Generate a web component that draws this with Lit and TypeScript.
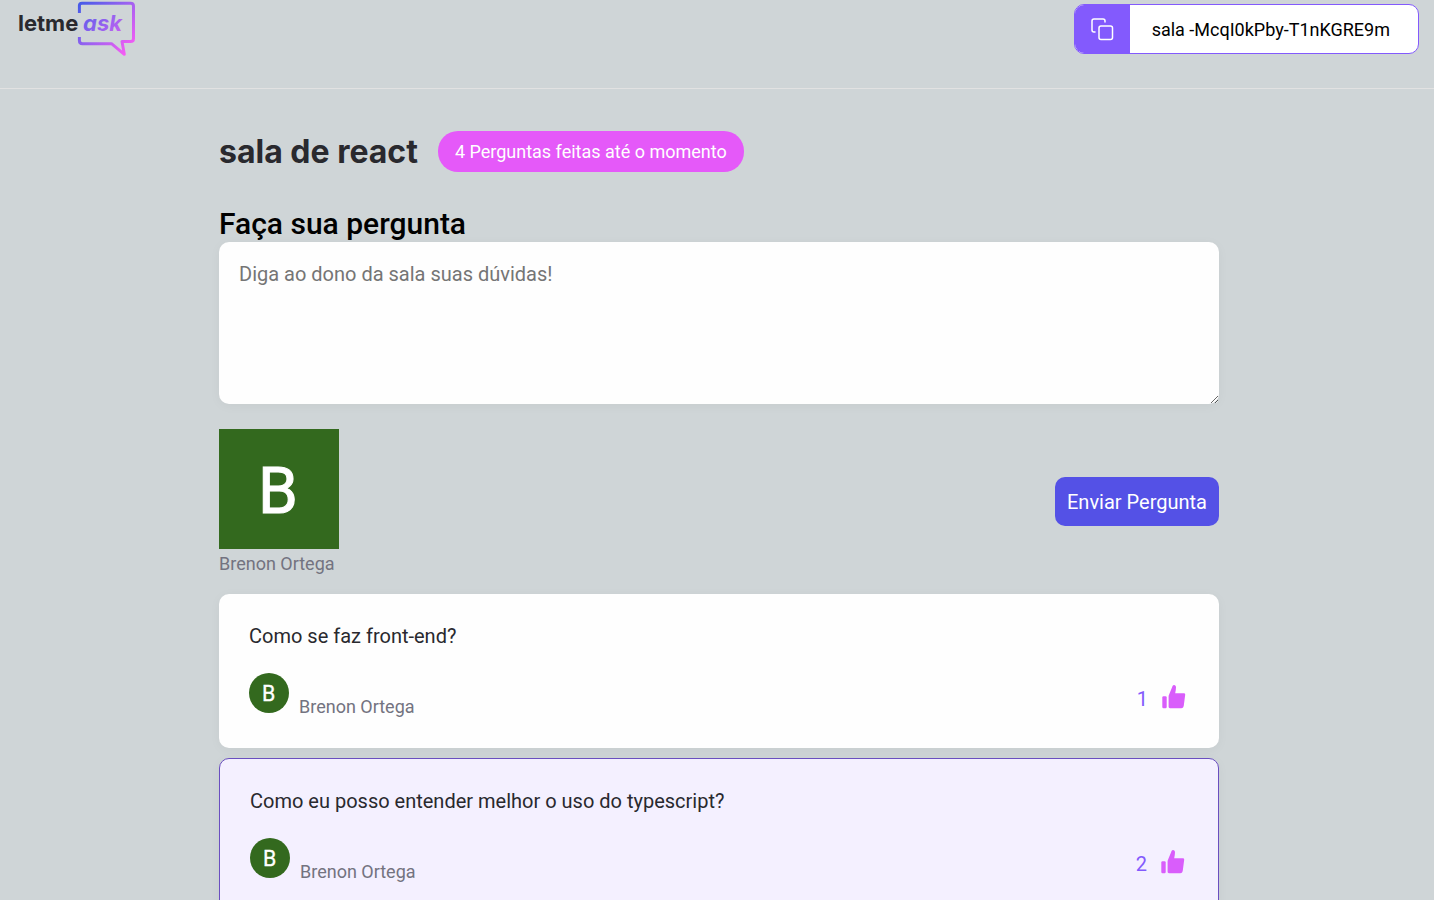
import { LitElement, html, css, svg } from "lit";
import { customElement, property, state } from "lit/decorators.js";
import { classMap } from "lit/directives/class-map.js";

interface Question {
  id: string;
  content: string;
  author: string;
  likes: number;
  highlighted: boolean;
}

@customElement("user-avatar")
class UserAvatar extends LitElement {
  @property() name = "";

  static styles = css`
    :host { display: block; background: #33691e; overflow: hidden; }
    .picture { display: block; width: 100%; }
    .letter { font: 64px Roboto, sans-serif; fill: #fff; stroke: #fff; stroke-width: 1; text-anchor: middle; }
  `;

  render() {
    return html`<svg class="picture" viewBox="0 0 120 120" role="img" aria-label=${this.name}>
      ${svg`<text class="letter" x="59" y="84">${this.name.charAt(0)}</text>`}
    </svg>`;
  }
}

@customElement("question-card")
class QuestionCard extends LitElement {
  @property({ attribute: false }) question!: Question;

  static styles = css`
    :host { display: block; }
    .card { background: #fefefe; border-radius: 10px; box-shadow: 0 2px 12px rgba(0, 0, 0, 0.04); padding: 30px; }
    .highlighted { background: #f4f0ff; border: 1px solid #6a4fc0; }
    .content { margin: 0; font-size: 20px; line-height: 24px; color: #29292e; }
    .footer { display: flex; justify-content: space-between; align-items: center; margin-top: 25px; }
    .author { display: flex; align-items: flex-start; gap: 10px; }
    .avatar { width: 40px; border-radius: 50%; }
    .name { font-size: 18px; line-height: 22px; margin-top: 23px; color: #737380; }
    .like { display: flex; align-items: center; gap: 11px; border: 0; padding: 6px 0 0; background: none; font: 20px/24px Roboto, sans-serif; color: #835afd; cursor: pointer; }
    .thumb { display: block; width: 30px; height: 30px; margin-bottom: 4px; fill: #d95dfb; }
  `;

  render() {
    const q = this.question;
    return html`<article class=${classMap({ card: true, highlighted: q.highlighted })}>
      <p class="content">${q.content}</p>
      <div class="footer">
        <div class="author">
          <user-avatar class="avatar" name=${q.author}></user-avatar>
          <span class="name">${q.author}</span>
        </div>
        <button class="like" type="button" aria-label="Marcar como gostei">
          <span>${q.likes}</span>
          <svg class="thumb" viewBox="0 0 30 30" aria-hidden="true">
            <rect x="3.3" y="14.2" width="4.4" height="12" rx="1.2" />
            <path d="M9.600 14.500c0-.7.2-1.400.5-2l3-7.200c.3-1.300.8-2.400 1.900-2.400 1.300 0 2 1.100 2 2.300 0 2-.4 4-.8 6h8.600c1 0 1.500.7 1.400 1.600l-1.400 10.800c-.2 1.600-1 2.600-2.500 2.600H11c-.8 0-1.400-.6-1.400-1.400z" />
          </svg>
        </button>
      </div>
    </article>`;
  }
}

@customElement("app-root")
class AppRoot extends LitElement {
  @state() private questions: Question[] = [
    { id: "q1", content: "Como se faz front-end?", author: "Brenon Ortega", likes: 1, highlighted: false },
    { id: "q2", content: "Como eu posso entender melhor o uso do typescript?", author: "Brenon Ortega", likes: 2, highlighted: true },
  ];

  static styles = css`
    :host { display: block; min-height: 100vh; box-sizing: border-box; background: #cfd5d7; color: #000; font-family: Roboto, sans-serif; padding-bottom: 30px; }
    .header { display: flex; justify-content: space-between; align-items: flex-start; padding: 0 15px 30px 0; border-bottom: 1px solid #e2e2e2; }
    .logo { display: block; width: 140px; height: 58px; }
    .word { font: 700 22px Inter, sans-serif; fill: #29292e; }
    .ask { font-style: italic; fill: url(#brand); }
    .code { display: flex; height: 50px; margin-top: 4px; border: 1px solid #835afd; border-radius: 10px; overflow: hidden; padding: 0; background: #fff; cursor: pointer; font: 18px Roboto, sans-serif; color: #000; }
    .copy { display: flex; align-items: center; justify-content: center; align-self: stretch; width: 55px; background: #835afd; }
    .copy-icon { width: 24px; height: 24px; fill: none; stroke: #fff; stroke-width: 1.5; stroke-linecap: round; stroke-linejoin: round; }
    .code-text { align-self: center; padding: 0 28px 0 22px; }
    .main { max-width: 1000px; margin: 0 auto; padding: 42px 0 0 4px; }
    .title-row { display: flex; align-items: center; gap: 20px; }
    .title { margin: 0; font: 700 32px/40px Inter, sans-serif; color: #29292e; }
    .badge { border-radius: 20px; padding: 10px 17px; background: #e559f9; color: #fff; font-size: 18px; line-height: 21px; }
    .label { display: block; margin-top: 34px; font-size: 30px; font-weight: 500; line-height: 36px; }
    .box { display: block; box-sizing: border-box; width: 100%; height: 162px; border: 0; border-radius: 10px; padding: 20px; background: #fefefe; box-shadow: 0 2px 12px rgba(0, 0, 0, 0.04); font: 20px/24px Roboto, sans-serif; resize: vertical; }
    .box::placeholder { color: #757575; }
    .form-footer { display: flex; justify-content: space-between; align-items: center; margin: 25px 0 20px; }
    .avatar { width: 120px; }
    .name { font-size: 18px; line-height: 21px; margin-top: 4px; color: #737380; }
    .send { height: 49px; border: 0; border-radius: 10px; padding: 0 12px; background: #5451e6; color: #fff; font: 20px Roboto, sans-serif; cursor: pointer; }
    .list { display: grid; gap: 10px; }
  `;

  render() {
    return html`
      <header class="header">
        <svg class="logo" viewBox="0 0 140 58" role="img" aria-label="letme ask">
          <defs>
            <linearGradient id="brand" gradientUnits="userSpaceOnUse" x1="80" y1="4" x2="129" y2="50">
              <stop offset="0" stop-color="#485be8" />
              <stop offset="0.5" stop-color="#9a62f0" />
              <stop offset="1" stop-color="#f55cf4" />
            </linearGradient>
          </defs>
          <text class="word" x="18" y="31">letme</text>
          <text class="word ask" x="83" y="31">ask</text>
          <path d="M79.400 13V5.500Q79.400 3.200 82 3.200H130.500Q133.500 3.200 133.500 6V38.500Q133.500 41.600 130.500 41.600H122L124.300 54.300L111.500 43.700H82.500Q79.400 43.700 79.400 40.500V37" fill="none" stroke="url(#brand)" stroke-width="3" stroke-linejoin="round" />
        </svg>
        <button class="code" type="button">
          <span class="copy">
            <svg class="copy-icon" viewBox="0 0 24 24" aria-hidden="true">
              <rect x="9" y="9" width="13.500" height="13.500" rx="2" />
              <path d="M5 15H4a2 2 0 0 1-2-2V4a2 2 0 0 1 2-2h9a2 2 0 0 1 2 2v1" />
            </svg>
          </span>
          <span class="code-text">sala -McqI0kPby-T1nKGRE9m</span>
        </button>
      </header>
      <main class="main">
        <div class="title-row">
          <h1 class="title">sala de react</h1>
          <span class="badge">4 Perguntas feitas até o momento</span>
        </div>
        <form @submit=${(e: Event) => e.preventDefault()}>
          <label class="label" for="question">Faça sua pergunta</label>
          <textarea class="box" id="question" placeholder="Diga ao dono da sala suas dúvidas!"></textarea>
          <div class="form-footer">
            <div>
              <user-avatar class="avatar" name="Brenon Ortega"></user-avatar>
              <div class="name">Brenon Ortega</div>
            </div>
            <button class="send" type="submit">Enviar Pergunta</button>
          </div>
        </form>
        <div class="list">
          ${this.questions.map((q) => html`<question-card .question=${q}></question-card>`)}
        </div>
      </main>
    `;
  }
}
